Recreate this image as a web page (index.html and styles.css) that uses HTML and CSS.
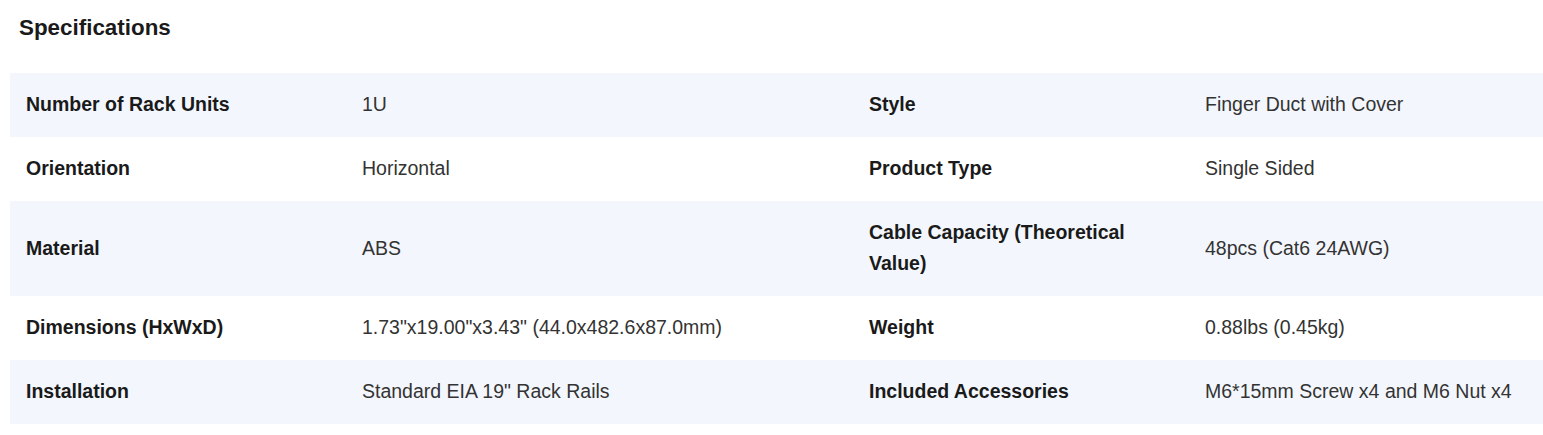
FILE: index.html
```html
<!DOCTYPE html>
<html lang="en">
<head>
<meta charset="utf-8">
<title>Specifications</title>
<link rel="stylesheet" href="styles.css">
</head>
<body>
<section class="specs">
  <h2 class="specs-title">Specifications</h2>
  <div class="spec-grid">
    <div class="spec-row tinted">
      <div class="cell label">Number of Rack Units</div>
      <div class="cell value">1U</div>
      <div class="cell label">Style</div>
      <div class="cell value">Finger Duct with Cover</div>
    </div>
    <div class="spec-row">
      <div class="cell label">Orientation</div>
      <div class="cell value">Horizontal</div>
      <div class="cell label">Product Type</div>
      <div class="cell value">Single Sided</div>
    </div>
    <div class="spec-row tinted">
      <div class="cell label">Material</div>
      <div class="cell value">ABS</div>
      <div class="cell label">Cable Capacity (Theoretical Value)</div>
      <div class="cell value">48pcs (Cat6 24AWG)</div>
    </div>
    <div class="spec-row">
      <div class="cell label">Dimensions (HxWxD)</div>
      <div class="cell value">1.73"x19.00"x3.43" (44.0x482.6x87.0mm)</div>
      <div class="cell label">Weight</div>
      <div class="cell value">0.88lbs (0.45kg)</div>
    </div>
    <div class="spec-row tinted">
      <div class="cell label">Installation</div>
      <div class="cell value">Standard EIA 19" Rack Rails</div>
      <div class="cell label">Included Accessories</div>
      <div class="cell value">M6*15mm Screw x4 and M6 Nut x4</div>
    </div>
  </div>
</section>
</body>
</html>
```

FILE: styles.css
```css
html, body {
  margin: 0;
  padding: 0;
  background: #ffffff;
}

body {
  font-family: "Liberation Sans", Arial, sans-serif;
  color: #222222;
}

.specs {
  display: flex;
  flex-direction: column;
  padding: 15px 0 0 10px;
  gap: 32px;
}

.specs-title {
  margin: 0 0 0 9px;
  font-size: 22.4px;
  line-height: 26px;
  font-weight: 700;
  color: #1a1a1a;
}

.spec-grid {
  display: flex;
  flex-direction: column;
  width: 1533px;
}

.spec-row {
  display: grid;
  grid-template-columns: 336px 507px 336px 1fr;
  align-items: center;
}

.spec-row.tinted {
  background: #f3f7fd;
}

.cell {
  padding: 16px 16px 17px 16px;
  font-size: 19.5px;
  line-height: 31px;
}

.label {
  font-weight: 700;
  color: #1a1a1a;
}

.value {
  font-weight: 400;
  color: #333333;
}
```
